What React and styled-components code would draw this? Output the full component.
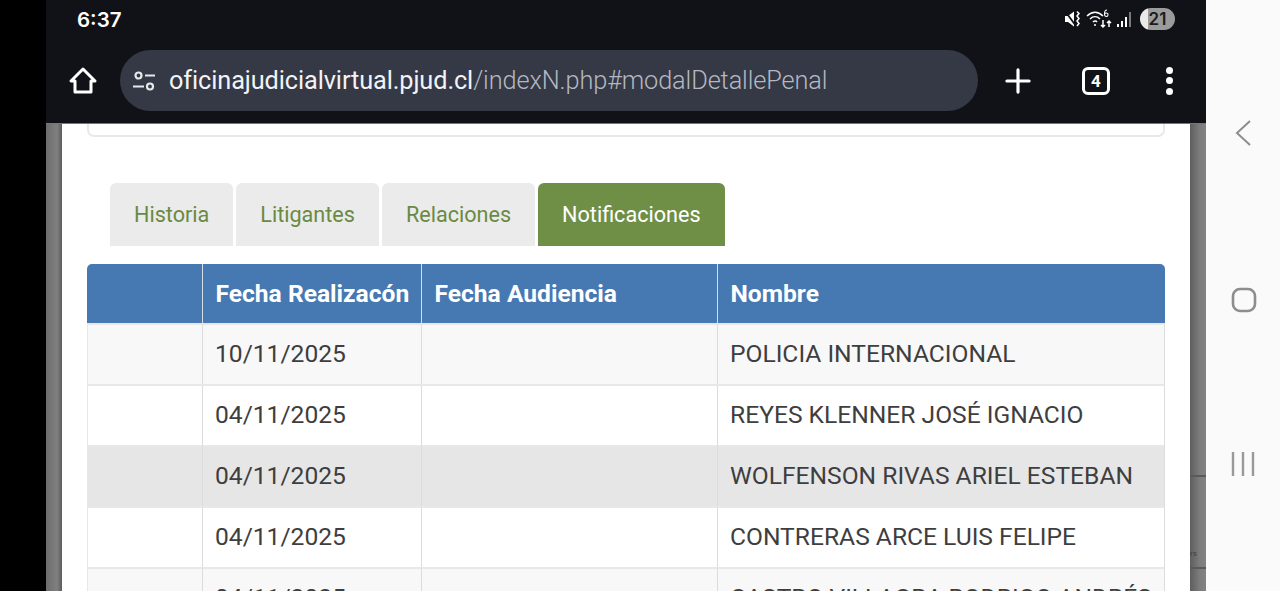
import React from 'react'
import styled, { createGlobalStyle } from 'styled-components'
import { Plus } from 'lucide-react'

const GlobalStyle = createGlobalStyle`
  html, body {
    margin: 0;
    height: 100%;
    overflow: hidden;
    background: #000;
    font-family: Roboto, "Liberation Sans", sans-serif;
  }
`

const Screen = styled.div`
  width: 1280px;
  height: 591px;
  display: flex;
  overflow: hidden;
  background: #000;
`

const Phone = styled.div`
  width: 1160px;
  margin-left: 46px;
  display: flex;
  flex-direction: column;
`

const Chrome = styled.div`
  height: 123px;
  flex: none;
  background: #101217;
  border-bottom: 1px solid #74767a;
  box-sizing: content-box;
  display: flex;
  flex-direction: column;
`

const StatusBar = styled.div`
  height: 40px;
  padding: 0 31px 2px 31px;
  box-sizing: border-box;
  display: flex;
  align-items: center;
  justify-content: space-between;
`

const Clock = styled.span`
  color: #fff;
  font-size: 20.500px;
  font-weight: 600;
  font-family: Inter, Roboto, sans-serif;
`

const StatusIcons = styled.div`
  display: flex;
  align-items: center;
  gap: 4px;
`

const Battery = styled.span`
  width: 35px;
  height: 22px;
  border-radius: 11px;
  margin-left: 3px;
  background: linear-gradient(90deg, #e9e9e9 0 22%, #9b9b9b 22%);
  color: #1b1c20;
  font-size: 17px;
  font-weight: 600;
  font-family: Inter, Roboto, sans-serif;
  display: flex;
  align-items: center;
  justify-content: center;
`

const Toolbar = styled.div`
  height: 61px;
  margin-top: 10px;
  display: flex;
  align-items: center;
  padding-left: 22px;
`

const HomeButton = styled.svg`
  width: 30px;
  height: 30px;
  flex: none;
`

const UrlBar = styled.div`
  width: 858px;
  height: 61px;
  margin-left: 22px;
  border-radius: 31px;
  background: #353945;
  display: flex;
  align-items: center;
  padding-left: 11px;
  box-sizing: border-box;
  flex: none;
`

const TuneIcon = styled.svg`
  width: 26px;
  height: 26px;
  flex: none;
`

const UrlText = styled.span`
  margin-left: 12px;
  font-size: 25.300px;
  letter-spacing: -0.1px;
  font-weight: 300;
  color: #b4b8c2;
  font-family: Roboto, sans-serif;
  white-space: nowrap;
`

const UrlHost = styled.span`
  color: #f2f3f6;
  font-weight: 400;
`

const ToolbarActions = styled.div`
  display: flex;
  align-items: center;
  margin-left: 21px;
  gap: 45px;
`

const TabCount = styled.span`
  width: 28px;
  height: 28px;
  box-sizing: border-box;
  border: 3px solid #fff;
  border-radius: 6px;
  color: #fff;
  font-size: 17px;
  font-weight: 700;
  display: flex;
  align-items: center;
  justify-content: center;
`

const MenuDots = styled.div`
  display: flex;
  flex-direction: column;
  gap: 3.500px;
  margin-left: 10.500px;
`

const Dot = styled.i`
  display: block;
  width: 7px;
  height: 7px;
  border-radius: 50%;
  background: #fff;
`

const Viewport = styled.div`
  flex: 1;
  min-height: 0;
  display: flex;
`

const LeftGutter = styled.div`
  width: 16px;
  flex: none;
  background: linear-gradient(90deg, #6c6c6c 0, #808080 11px, #5c5c5c 16px);
`

const RightGutter = styled.div`
  width: 16px;
  flex: none;
  display: flex;
  flex-direction: column;
  background: linear-gradient(90deg, #5e5e5e 0, #7c7c7c 60%, #828282 100%);
`

const BackdropRow = styled.div`
  height: ${p => p.$height}px;
  flex: none;
  box-sizing: border-box;
  border-bottom: 2px solid #5a5a5a;
  display: flex;
  align-items: flex-end;
  padding-bottom: 8px;
`

const BackdropText = styled.span`
  font-size: 8px;
  line-height: 10px;
  color: #3f3f3f;
  font-family: Roboto, sans-serif;
`

const Modal = styled.div`
  width: 1128px;
  background: #fff;
  padding: 0 25px;
  box-sizing: border-box;
  flex: none;
`

const TopCard = styled.div`
  height: 11px;
  background: #fff;
  border: 2px solid #e8e8e8;
  border-top: 0;
  border-radius: 0 0 7px 7px;
`

const Tabs = styled.div`
  display: flex;
  gap: 3px;
  margin: 46px 0 17px 23px;
  height: 64px;
`

const Tab = styled.div`
  height: 63px;
  padding: 0 24px;
  border-radius: 6px 6px 0 0;
  display: flex;
  align-items: center;
  font-size: 21.600px;
  background: ${p => (p.$active ? '#6f8f47' : '#ebebeb')};
  color: ${p => (p.$active ? '#fff' : '#6a8a42')};
`

const Table = styled.table`
  width: 1078px;
  border-collapse: separate;
  border-spacing: 0;
  table-layout: fixed;
  font-size: 24.600px;
  color: #3e3e3e;
`

const HeadCell = styled.th`
  height: 59px;
  padding: 0 0 0 12.500px;
  box-sizing: border-box;
  background: #4678b2;
  color: #fff;
  font-weight: 700;
  text-align: left;
  border-left: 1px solid #d6dde6;
  white-space: nowrap;
  &:first-child {
    border-left: 0;
    border-top-left-radius: 5px;
  }
  &:last-child {
    border-top-right-radius: 5px;
  }
`

const Cell = styled.td`
  height: 61px;
  padding: 0 0 2px 12px;
  box-sizing: border-box;
  border-top: 2px solid #e8e8e8;
  border-left: 1px solid #dcdcdc;
  white-space: nowrap;
  overflow: hidden;
  &:last-child {
    border-right: 1px solid #dcdcdc;
  }
  &:first-child {
    border-left: 1px solid #e8e8e8;
  }
`

const Row = styled.tr`
  background: ${p => p.$bg};
`

const NavBar = styled.div`
  width: 74px;
  flex: none;
  background: #fafafa;
  display: flex;
  flex-direction: column;
  align-items: center;
  justify-content: space-between;
  padding: 119px 0 115px;
  box-sizing: border-box;
`

const SquareIcon = styled.svg`
  margin-left: 1px;
`

const rows = [
  { date: '10/11/2025', name: 'POLICIA INTERNACIONAL', bg: '#f8f8f8' },
  { date: '04/11/2025', name: 'REYES KLENNER JOSÉ IGNACIO', bg: '#fff' },
  { date: '04/11/2025', name: 'WOLFENSON RIVAS ARIEL ESTEBAN', bg: '#e7e6e7' },
  { date: '04/11/2025', name: 'CONTRERAS ARCE LUIS FELIPE', bg: '#fff' },
  { date: '04/11/2025', name: 'CASTRO VILLAGRA RODRIGO ANDRÉS', bg: '#f8f8f8' },
]

const tabs = ['Historia', 'Litigantes', 'Relaciones', 'Notificaciones']

const App = () => (
  <>
    <GlobalStyle />
    <Screen>
      <Phone>
        <Chrome>
          <StatusBar>
            <Clock>6:37</Clock>
            <StatusIcons>
              <svg width="18" height="18" viewBox="0 0 18 18">
                <path d="M1 6h3l6-4.500v15L4 12H1z" fill="#fff" />
                <path d="M1 1l11 15" stroke="#101217" strokeWidth="1.800" />
                <path d="M13 1.500l2 2-2 2.500 2 2.500-2 2.500 2 2.500-2 2.500" stroke="#fff" strokeWidth="1.500" fill="none" />
              </svg>
              <svg width="26" height="20" viewBox="0 0 26 20" fill="none" stroke="#fff" strokeWidth="1.500">
                <path d="M1 7c5-5 11-5 16 0M4 10c3-3 7-3 10 0M7 13c1.500-1.500 3-1.500 4 0" />
                <circle cx="9" cy="16" r="1" fill="#fff" stroke="none" />
                <path d="M17 11v7M15 16l2 2 2-2M23 18v-6M21 14l2-2 2 2" />
                <path d="M21 1c-2 0-2.500 2-2.500 4s1 2.500 2 2.500 1.500-.8 1.500-1.800-.7-1.700-1.700-1.700-1.800.7-1.800 1.700" strokeWidth="1.100" />
              </svg>
              <svg width="17" height="18" viewBox="0 0 17 18" fill="#fff">
                <rect x="1" y="14" width="2" height="3" />
                <rect x="5" y="11" width="2" height="6" />
                <rect x="9" y="7" width="2" height="10" />
                <rect x="13" y="2" width="2" height="15" fill="#77797d" />
              </svg>
              <Battery>21</Battery>
            </StatusIcons>
          </StatusBar>
          <Toolbar>
            <HomeButton viewBox="0 0 30 30" fill="none" stroke="#fff" strokeWidth="3" strokeLinejoin="round">
              <path d="M15 3L3 15h4v11h16V15h4z" />
            </HomeButton>
            <UrlBar>
              <TuneIcon viewBox="0 0 26 26" fill="none" stroke="#e8e9ed" strokeWidth="2.200">
                <circle cx="7.500" cy="7.500" r="3" />
                <path d="M14 7.500h10M2 18.500h11" />
                <circle cx="19" cy="18.500" r="3" />
              </TuneIcon>
              <UrlText>
                <UrlHost>oficinajudicialvirtual.pjud.cl</UrlHost>/indexN.php#modalDetallePenal
              </UrlText>
            </UrlBar>
            <ToolbarActions>
              <Plus size={38} color="#fff" strokeWidth={2} />
              <TabCount>4</TabCount>
              <MenuDots>
                <Dot />
                <Dot />
                <Dot />
              </MenuDots>
            </ToolbarActions>
          </Toolbar>
        </Chrome>
        <Viewport>
          <LeftGutter />
          <Modal>
            <TopCard />
            <Tabs>
              {tabs.map(t => (
                <Tab key={t} $active={t === 'Notificaciones'}>
                  {t}
                </Tab>
              ))}
            </Tabs>
            <Table>
              <colgroup>
                <col style={{ width: 115 }} />
                <col style={{ width: 219 }} />
                <col style={{ width: 296 }} />
                <col />
              </colgroup>
              <thead>
                <tr>
                  <HeadCell />
                  <HeadCell>Fecha Realizacón</HeadCell>
                  <HeadCell>Fecha Audiencia</HeadCell>
                  <HeadCell>Nombre</HeadCell>
                </tr>
              </thead>
              <tbody>
                {rows.map(r => (
                  <Row key={r.name} $bg={r.bg}>
                    <Cell />
                    <Cell>{r.date}</Cell>
                    <Cell />
                    <Cell>{r.name}</Cell>
                  </Row>
                ))}
              </tbody>
            </Table>
          </Modal>
          <RightGutter>
            <BackdropRow $height={353} />
            <BackdropRow $height={92}>
              <BackdropText>rs</BackdropText>
            </BackdropRow>
          </RightGutter>
        </Viewport>
      </Phone>
      <NavBar>
        <svg width="20" height="28" viewBox="0 0 20 28" fill="none" stroke="#8d8d8d" strokeWidth="2">
          <path d="M17 2L4 14l13 12" />
        </svg>
        <SquareIcon width="26" height="26" viewBox="0 0 26 26" fill="none" stroke="#8d8d8d" strokeWidth="2.600">
          <rect x="2" y="2" width="22" height="22" rx="7" />
        </SquareIcon>
        <svg width="24" height="24" viewBox="0 0 24 24" fill="none" stroke="#999" strokeWidth="2.400">
          <path d="M2 0v24M12 0v24M22 0v24" />
        </svg>
      </NavBar>
    </Screen>
  </>
)

export default App
